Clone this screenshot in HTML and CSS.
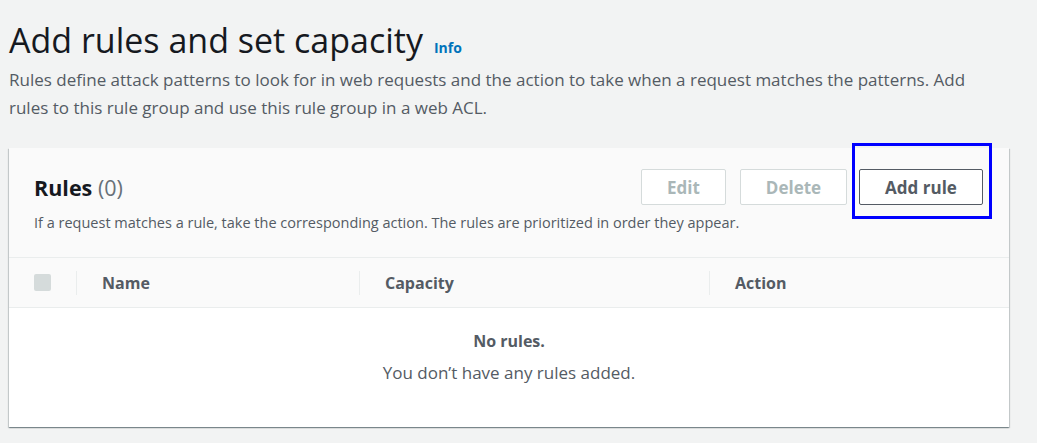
FILE: index.html
```html
<!DOCTYPE html>
<html lang="en">
<head>
<meta charset="UTF-8">
<title>Add rules and set capacity</title>
<link rel="stylesheet" href="styles.css">
</head>
<body>

<div class="page">
    <div class="page-header">
        <h1>Add rules and set capacity</h1>
        <a class="info-link" href="#">Info</a>
    </div>
    <p class="page-desc">Rules define attack patterns to look for in web requests and the action to take when a request matches the patterns. Add rules to this rule group and use this rule group in a web ACL.</p>

    <div class="panel">
        <div class="panel-header">
            <div class="panel-title-row">
                <h2>Rules <span class="count">(0)</span></h2>
                <div class="actions">
                    <button class="btn btn-edit" disabled>Edit</button>
                    <button class="btn btn-delete" disabled>Delete</button>
                    <span class="focus-ring"><button class="btn btn-normal">Add rule</button></span>
                </div>
            </div>
            <p class="panel-desc">If a request matches a rule, take the corresponding action. The rules are prioritized in order they appear.</p>
        </div>

        <div class="table-head">
            <div class="col col-check"><span class="checkbox"></span></div>
            <div class="col col-name">Name</div>
            <div class="col col-capacity">Capacity</div>
            <div class="col col-action">Action</div>
        </div>

        <div class="empty">
            <div class="empty-title">No rules.</div>
            <div class="empty-text">You don’t have any rules added.</div>
        </div>
    </div>
</div>

</body>
</html>
```

FILE: styles.css
```css
body {
    margin: 0;
    padding: 0;
    background-color: #f2f3f3;
    font-family: "Open Sans", Arial, sans-serif;
    color: #16191f;
}
.page {
    padding: 14px 28px 15px 9px;
}
.page-header {
    display: flex;
    align-items: baseline;
    gap: 11px;
}
h1 {
    margin: 0;
    font-size: 34px;
    font-weight: 400;
    line-height: 52px;
    color: #16191f;
}
.info-link {
    color: #0073bb;
    font-size: 14px;
    font-weight: 700;
    text-decoration: none;
}
.page-desc {
    margin: 0 0 26px;
    max-width: 980px;
    font-size: 17px;
    line-height: 28px;
    color: #545b64;
}
.panel {
    background-color: #ffffff;
    box-shadow: 0 1px 1px 0 rgba(0, 28, 36, 0.3), 1px 1px 1px 0 rgba(0, 28, 36, 0.15), -1px 1px 1px 0 rgba(0, 28, 36, 0.15);
    width: 1000px;
}
.panel-header {
    background-color: #fafafa;
    padding: 21px 26px 25px 25px;
    border-bottom: 1px solid #eaeded;
}
.panel-title-row {
    display: flex;
    justify-content: space-between;
    align-items: center;
}
h2 {
    margin: 0;
    font-size: 21.5px;
    font-weight: 700;
    color: #16191f;
}
.count {
    font-weight: 400;
    color: #687078;
}
.actions {
    display: flex;
    align-items: center;
}
.btn {
    font-family: inherit;
    font-size: 17px;
    font-weight: 700;
    height: 36px;
    padding: 0;
    border-radius: 2px;
    border: 1px solid #d5dbdb;
    background-color: #ffffff;
    color: #aab7b8;
}
.btn-edit {
    width: 85px;
    margin-right: 14px;
}
.btn-delete {
    width: 107px;
    margin-right: 12px;
}
.btn-normal {
    width: 124px;
    border-color: #545b64;
    color: #545b64;
    cursor: pointer;
}
.focus-ring {
    display: block;
    outline: 3px solid #0000ff;
    padding: 23px 6px 11px 4px;
    margin: -23px -6px -11px -4px;
}
.focus-ring .btn {
    display: block;
}
.panel-desc {
    margin: 8px 0 0;
    font-size: 14.5px;
    color: #545b64;
}
.table-head {
    display: flex;
    align-items: center;
    height: 49px;
    background-color: #fafafa;
    border-bottom: 1px solid #eaeded;
    font-size: 16px;
    font-weight: 700;
    color: #545b64;
}
.col {
    padding-left: 25px;
    border-left: 1px solid #eaeded;
    line-height: 24px;
}
.col-check {
    border-left: none;
    width: 42px;
    display: flex;
    align-items: center;
}
.checkbox {
    width: 17px;
    height: 17px;
    border-radius: 2px;
    background-color: #d5dbdb;
}
.col-name {
    width: 257px;
}
.col-capacity {
    width: 324px;
}
.col-action {
    flex: 1;
}
.empty {
    text-align: center;
    padding: 21px 0 42px;
    font-size: 16px;
    color: #545b64;
}
.empty-title {
    font-weight: 700;
    line-height: 24px;
}
.empty-text {
    margin-top: 8px;
    font-size: 17px;
    line-height: 24px;
}
```
